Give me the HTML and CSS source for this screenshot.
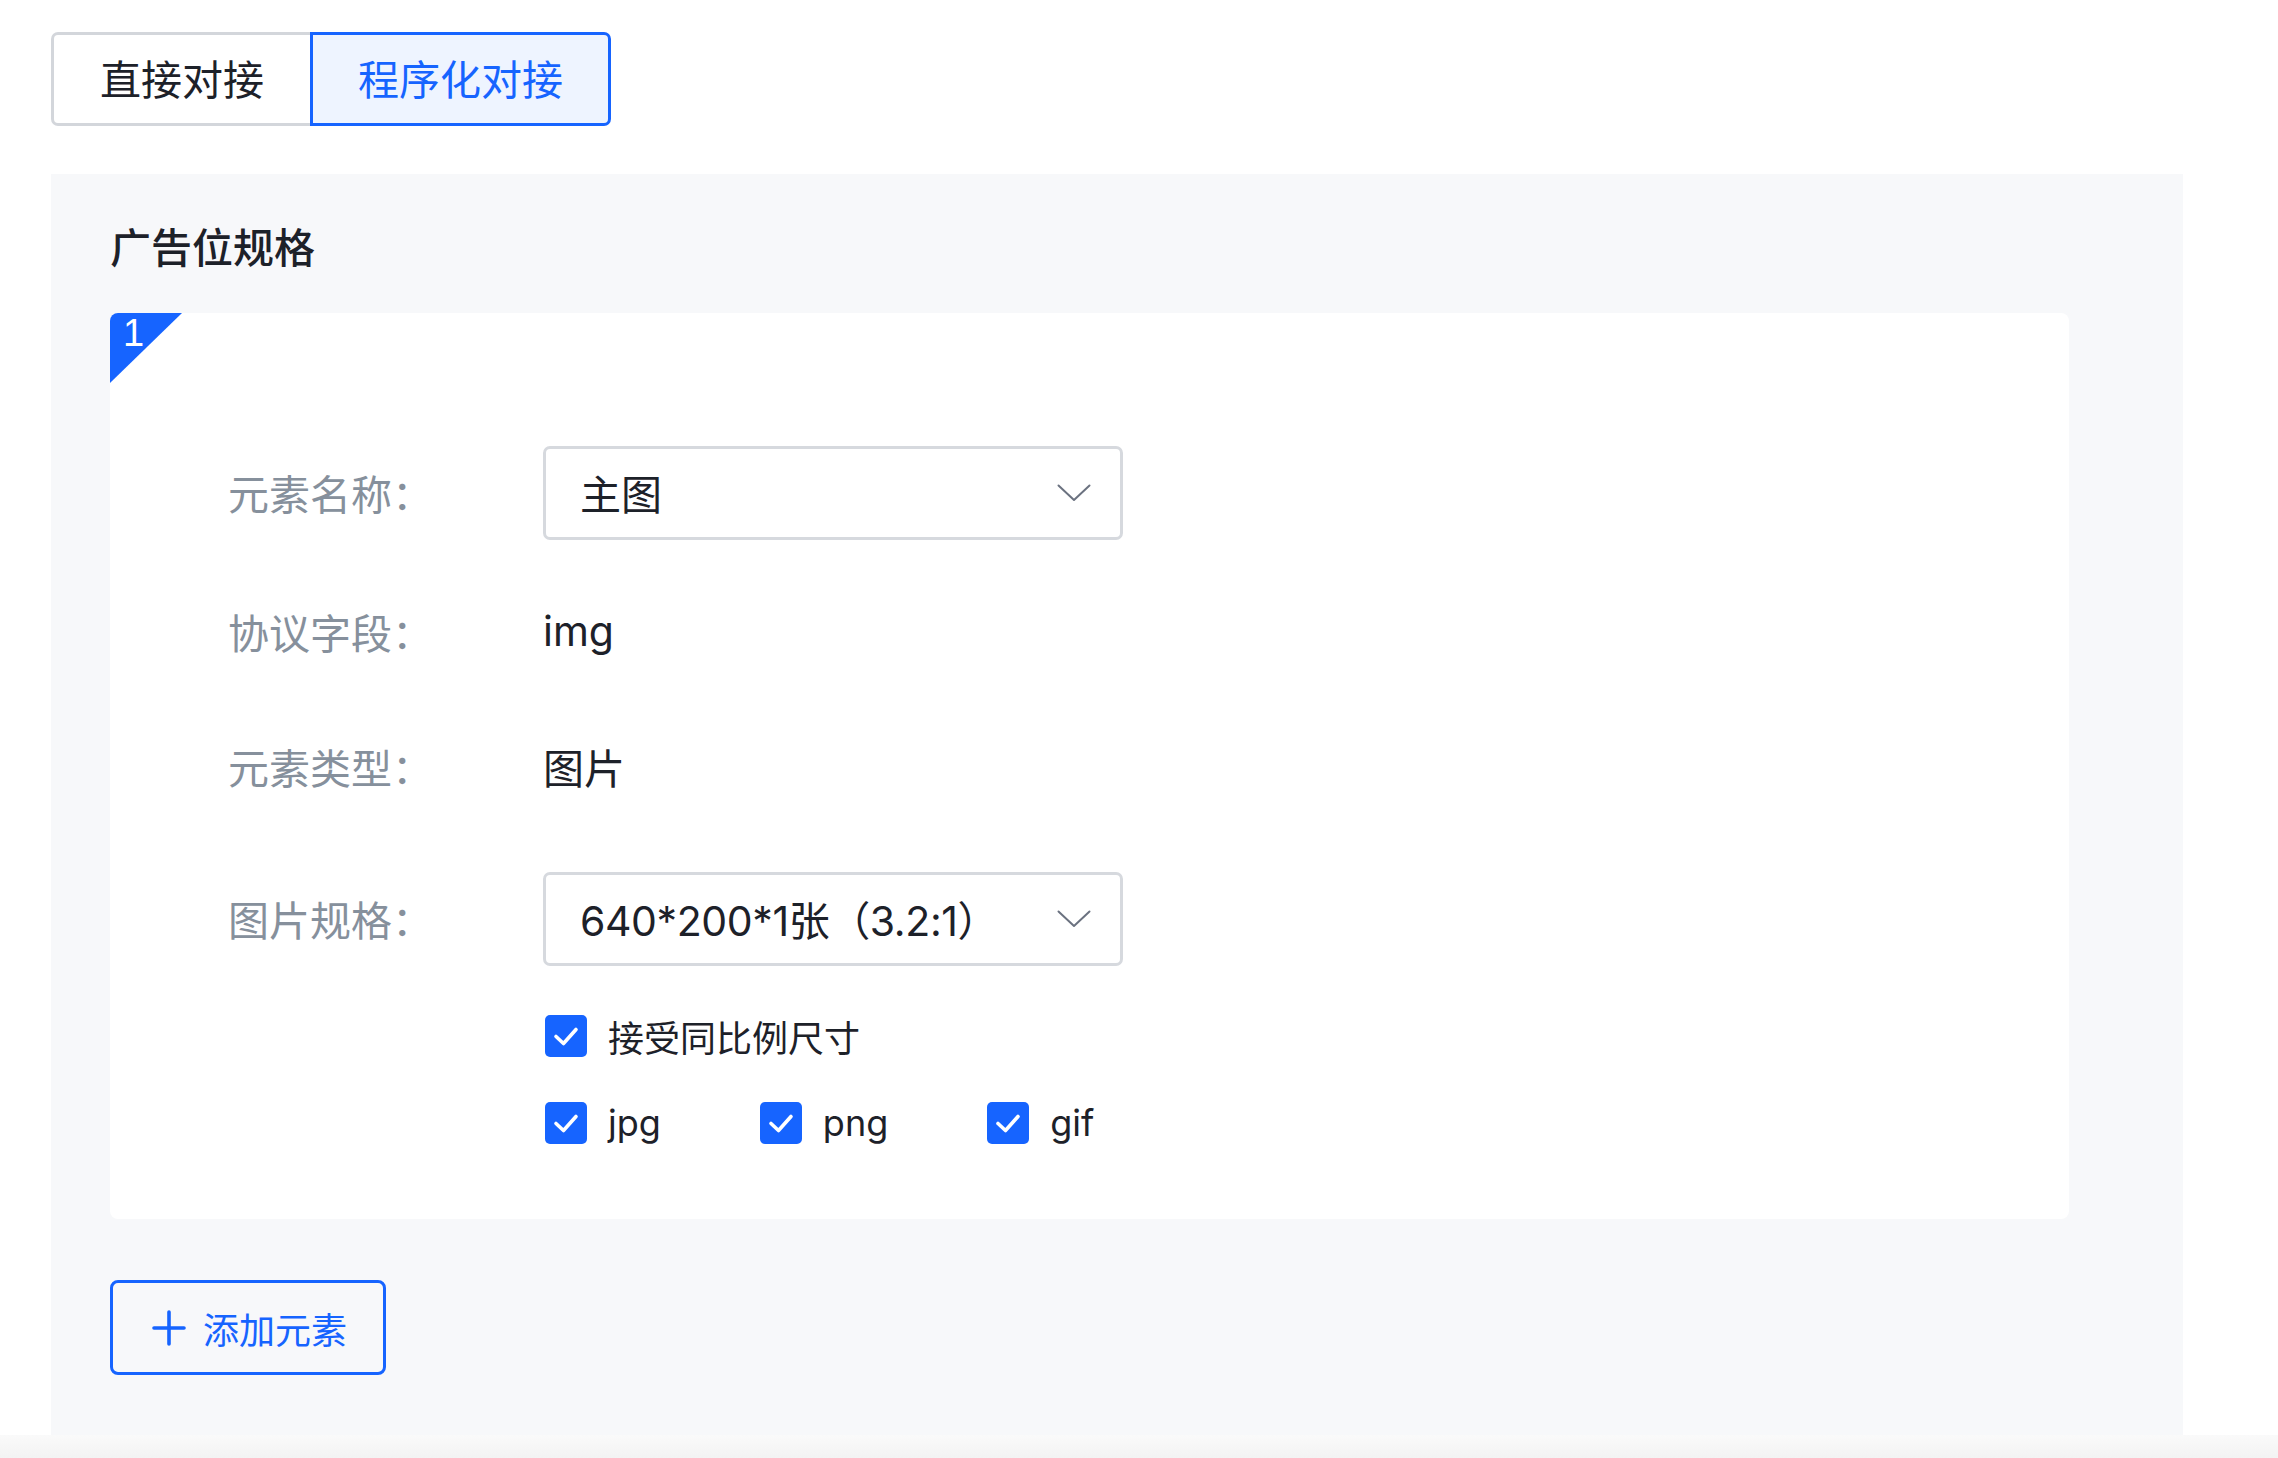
FILE: index.html
```html
<!DOCTYPE html>
<html lang="zh-CN">
<head>
<meta charset="utf-8">
<title>广告位规格</title>
<link rel="stylesheet" href="styles.css">
</head>
<body>
<div class="page">
  <div class="tabs">
    <div class="tab">直接对接</div>
    <div class="tab active">程序化对接</div>
  </div>

  <div class="panel">
    <div class="panel-title">广告位规格</div>

    <div class="card">
      <div class="badge"><span class="badge-num">1</span></div>

      <div class="form">
        <div class="form-item gap-45">
          <div class="label">元素名称：</div>
          <div class="select">
            <span class="select-text">主图</span>
            <svg class="chevron" viewBox="0 0 34 18" width="34" height="18"><polyline points="1.5,1.5 17,16 32.5,1.5" fill="none" stroke="#6b7280" stroke-width="2" stroke-linecap="round" stroke-linejoin="round"/></svg>
          </div>
        </div>

        <div class="form-item gap-41">
          <div class="label">协议字段：</div>
          <div class="value">img</div>
        </div>

        <div class="form-item gap-58">
          <div class="label">元素类型：</div>
          <div class="value">图片</div>
        </div>

        <div class="form-item gap-49">
          <div class="label">图片规格：</div>
          <div class="select">
            <span class="select-text condensed">640*200*1张（3.2:1）</span>
            <svg class="chevron" viewBox="0 0 34 18" width="34" height="18"><polyline points="1.5,1.5 17,16 32.5,1.5" fill="none" stroke="#6b7280" stroke-width="2" stroke-linecap="round" stroke-linejoin="round"/></svg>
          </div>
        </div>

        <div class="check-row gap-45">
          <label class="check">
            <span class="box"><svg viewBox="0 0 42 42" width="42" height="42"><polyline points="11,21.5 18.5,28.5 31,14.5" fill="none" stroke="#fff" stroke-width="3.6" stroke-linecap="round" stroke-linejoin="round"/></svg></span>
            <span class="check-text">接受同比例尺寸</span>
          </label>
        </div>

        <div class="check-row group">
          <label class="check">
            <span class="box"><svg viewBox="0 0 42 42" width="42" height="42"><polyline points="11,21.5 18.5,28.5 31,14.5" fill="none" stroke="#fff" stroke-width="3.6" stroke-linecap="round" stroke-linejoin="round"/></svg></span>
            <span class="check-text">jpg</span>
          </label>
          <label class="check">
            <span class="box"><svg viewBox="0 0 42 42" width="42" height="42"><polyline points="11,21.5 18.5,28.5 31,14.5" fill="none" stroke="#fff" stroke-width="3.6" stroke-linecap="round" stroke-linejoin="round"/></svg></span>
            <span class="check-text">png</span>
          </label>
          <label class="check">
            <span class="box"><svg viewBox="0 0 42 42" width="42" height="42"><polyline points="11,21.5 18.5,28.5 31,14.5" fill="none" stroke="#fff" stroke-width="3.6" stroke-linecap="round" stroke-linejoin="round"/></svg></span>
            <span class="check-text">gif</span>
          </label>
        </div>
      </div>
    </div>

    <button class="add-btn" type="button">
      <svg class="plus" viewBox="0 0 34 36" width="34" height="36"><path d="M17 2 V34 M2 18 H32" fill="none" stroke="#1664ff" stroke-width="3.6" stroke-linecap="round"/></svg>
      <span>添加元素</span>
    </button>
  </div>
</div>
<div class="bottom-shade"></div>
</body>
</html>
```

FILE: styles.css
```css
* {
  box-sizing: border-box;
}

html, body {
  margin: 0;
  padding: 0;
  background: #ffffff;
}

body {
  font-family: Inter, "Noto Sans CJK SC", sans-serif;
  color: #1d2129;
  overflow: hidden;
}

.page {
  padding: 32px 0 0 51px;
}

/* Tabs */
.tabs {
  display: flex;
  height: 94px;
}

.tab {
  display: flex;
  align-items: center;
  justify-content: center;
  padding: 0 46px 4px;
  font-size: 41px;
  color: #1d2129;
  background: #ffffff;
  border: 3px solid #d3d6db;
  border-right: none;
  border-radius: 7px 0 0 7px;
}

.tab.active {
  color: #1664ff;
  background: #eef4ff;
  border: 3px solid #1664ff;
  border-radius: 0 7px 7px 0;
  padding: 0 45px 4px;
}

/* Panel */
.panel {
  width: 2132px;
  margin-top: 48px;
  background: #f7f8fa;
  padding: 45px 114px 61px 59px;
}

.panel-title {
  height: 58px;
  line-height: 58px;
  font-size: 41px;
  font-weight: 500;
  color: #1d2129;
}

.card {
  position: relative;
  margin-top: 36px;
  background: #ffffff;
  border-radius: 8px;
  padding: 133px 0 75px 118px;
}

.badge {
  position: absolute;
  top: 0;
  left: 0;
  width: 72px;
  height: 70px;
  background: #1664ff;
  clip-path: polygon(0 0, 100% 0, 0 100%);
  border-top-left-radius: 8px;
}

.badge-num {
  position: absolute;
  left: 13px;
  top: 0;
  font-family: "Liberation Sans", sans-serif;
  font-size: 38px;
  line-height: 40px;
  color: #ffffff;
}

/* Form */
.form {
  display: flex;
  flex-direction: column;
}

.form-item {
  display: flex;
  align-items: center;
  height: 94px;
}

.gap-45 { margin-bottom: 45px; }
.gap-41 { margin-bottom: 41px; }
.gap-58 { margin-bottom: 58px; }
.gap-49 { margin-bottom: 49px; }

.label {
  width: 315px;
  flex: none;
  font-size: 41px;
  color: #86909c;
  padding-bottom: 3px;
}

.value {
  font-size: 41px;
  color: #1d2129;
  padding-bottom: 3px;
}

.select {
  width: 580px;
  height: 94px;
  display: flex;
  align-items: center;
  justify-content: space-between;
  padding: 0 29px 3px 34px;
  border: 3px solid #d6d9de;
  border-radius: 7px;
  background: #ffffff;
}

.select-text {
  font-size: 41px;
  color: #1d2129;
}

.select-text.condensed {
  letter-spacing: -0.4px;
}

.chevron {
  flex: none;
  margin-top: 3px;
}

/* Checkboxes */
.check-row {
  display: flex;
  align-items: center;
  height: 42px;
  padding-left: 317px;
}

.check-row.group {
  gap: 99px;
}

.check {
  display: flex;
  align-items: center;
}

.box {
  width: 42px;
  height: 42px;
  flex: none;
  background: #1664ff;
  border-radius: 5px;
  display: flex;
}

.check-text {
  margin-left: 21px;
  font-size: 36px;
  color: #1d2129;
}

/* Add button */
.add-btn {
  display: flex;
  align-items: center;
  margin-top: 61px;
  height: 95px;
  padding: 0 36px 0 39px;
  border: 3px solid #1664ff;
  border-radius: 8px;
  background: transparent;
  color: #1664ff;
  font-family: Inter, "Noto Sans CJK SC", sans-serif;
  font-size: 36px;
}

.plus {
  flex: none;
  margin-right: 17px;
}

.bottom-shade {
  position: fixed;
  left: 0;
  right: 0;
  bottom: 0;
  height: 23px;
  background: linear-gradient(to bottom, #fafafa, #f3f3f3);
}
```
